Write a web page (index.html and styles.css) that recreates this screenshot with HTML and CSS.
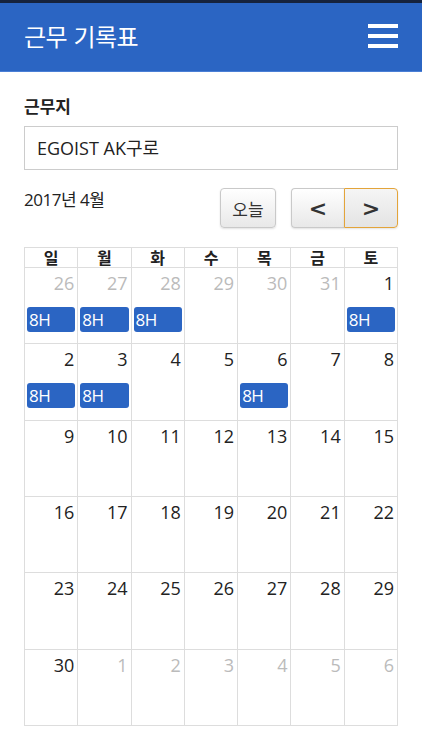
FILE: index.html
```html
<!DOCTYPE html>
<html lang="ko">
<head>
<meta charset="utf-8">
<link rel="stylesheet" href="styles.css">
</head>
<body>
<header class="topbar">
  <h1 class="title">근무 기록표</h1>
  <div class="menu"><span></span><span></span><span></span></div>
</header>
<main class="content">
  <div class="label">근무지</div>
  <div class="input">EGOIST AK구로</div>
  <div class="toolbar">
    <div class="month">2017년 4월</div>
    <div class="btns">
      <button class="btn today">오늘</button>
      <div class="group">
        <button class="btn nav">&lt;</button>
        <button class="btn nav focus">&gt;</button>
      </div>
    </div>
  </div>
  <div class="cal">
    <div class="dow">일</div><div class="dow">월</div><div class="dow">화</div><div class="dow">수</div><div class="dow">목</div><div class="dow">금</div><div class="dow">토</div>

    <div class="day other"><span class="num">26</span><span class="ev">8H</span></div>
    <div class="day other"><span class="num">27</span><span class="ev">8H</span></div>
    <div class="day other"><span class="num">28</span><span class="ev">8H</span></div>
    <div class="day other"><span class="num">29</span></div>
    <div class="day other"><span class="num">30</span></div>
    <div class="day other"><span class="num">31</span></div>
    <div class="day"><span class="num">1</span><span class="ev">8H</span></div>

    <div class="day"><span class="num">2</span><span class="ev">8H</span></div>
    <div class="day"><span class="num">3</span><span class="ev">8H</span></div>
    <div class="day"><span class="num">4</span></div>
    <div class="day"><span class="num">5</span></div>
    <div class="day"><span class="num">6</span><span class="ev">8H</span></div>
    <div class="day"><span class="num">7</span></div>
    <div class="day"><span class="num">8</span></div>

    <div class="day"><span class="num">9</span></div>
    <div class="day"><span class="num">10</span></div>
    <div class="day"><span class="num">11</span></div>
    <div class="day"><span class="num">12</span></div>
    <div class="day"><span class="num">13</span></div>
    <div class="day"><span class="num">14</span></div>
    <div class="day"><span class="num">15</span></div>

    <div class="day"><span class="num">16</span></div>
    <div class="day"><span class="num">17</span></div>
    <div class="day"><span class="num">18</span></div>
    <div class="day"><span class="num">19</span></div>
    <div class="day"><span class="num">20</span></div>
    <div class="day"><span class="num">21</span></div>
    <div class="day"><span class="num">22</span></div>

    <div class="day"><span class="num">23</span></div>
    <div class="day"><span class="num">24</span></div>
    <div class="day"><span class="num">25</span></div>
    <div class="day"><span class="num">26</span></div>
    <div class="day"><span class="num">27</span></div>
    <div class="day"><span class="num">28</span></div>
    <div class="day"><span class="num">29</span></div>

    <div class="day"><span class="num">30</span></div>
    <div class="day other"><span class="num">1</span></div>
    <div class="day other"><span class="num">2</span></div>
    <div class="day other"><span class="num">3</span></div>
    <div class="day other"><span class="num">4</span></div>
    <div class="day other"><span class="num">5</span></div>
    <div class="day other"><span class="num">6</span></div>
  </div>
</main>
</body>
</html>
```
FILE: styles.css
```css
* { box-sizing: border-box; }
html, body { margin: 0; padding: 0; background: #fff; }
body {
  width: 422px;
  height: 750px;
  overflow: hidden;
  font-family: "Open Sans", "Noto Sans CJK KR", sans-serif;
  color: #222;
}
.topbar {
  height: 72px;
  border-top: 3px solid #16233d;
  border-bottom: 1px solid #4a7fd6;
  background: #2b65c3;
  display: flex;
  align-items: center;
  justify-content: space-between;
  padding: 0 24px 0 24px;
}
.title {
  margin: 0;
  font-family: "Noto Sans CJK KR", sans-serif;
  font-weight: 400;
  font-size: 24px;
  color: #fff;
  letter-spacing: -0.5px;
  position: relative;
  top: -2px;
}
.menu {
  width: 30px;
  display: flex;
  flex-direction: column;
  gap: 6.5px;
  position: relative;
  top: -1px;
}
.menu span {
  display: block;
  height: 3.5px;
  background: #fff;
}
.content { padding: 0 24px; }
.label {
  margin-top: 22px;
  font-family: "Noto Sans CJK KR", sans-serif;
  font-weight: 700;
  font-size: 17px;
  line-height: 24px;
  color: #222;
}
.input {
  margin-top: 8px;
  height: 44px;
  border: 1px solid #ccc;
  padding: 0 12px;
  font-size: 18px;
  line-height: 42px;
  color: #222;
}
.toolbar {
  margin-top: 17px;
  display: flex;
  justify-content: space-between;
  align-items: flex-start;
  height: 60px;
}
.month {
  font-family: "Open Sans", "Noto Sans CJK KR", sans-serif;
  font-size: 17px;
  line-height: 24px;
  margin-top: 1px;
  letter-spacing: -0.5px;
}
.btns { display: flex; gap: 15px; margin-top: 1px; }
.group { display: flex; }
.btn {
  height: 40px;
  border: 1px solid #c9c9c9;
  border-radius: 4px;
  background: linear-gradient(#ffffff, #e8e8e8);
  box-shadow: 0 1px 2px rgba(0,0,0,0.12);
  font-family: "Noto Sans CJK KR", sans-serif;
  font-size: 17px;
  color: #333;
  padding: 0;
  margin: 0;
}
.today { width: 56px; }
.nav {
  width: 53px;
  font-family: "DejaVu Sans", sans-serif;
  font-weight: 700;
  font-size: 22px;
  color: #333;
}
.group .nav:first-child { border-radius: 4px 0 0 4px; border-right: none; }
.group .nav:last-child { border-radius: 0 4px 4px 0; width: 54px; }
.nav.focus { border: 1px solid #e3a43a; background: linear-gradient(#f5f5f5, #e4e4e4); }
.cal {
  display: grid;
  grid-template-columns: repeat(7, 1fr);
  grid-template-rows: 20px repeat(6, 76.33px);
  border-top: 1px solid #ddd;
  border-left: 1px solid #ddd;
  width: 374px;
}
.dow {
  border-right: 1px solid #ddd;
  border-bottom: 1px solid #ddd;
  text-align: center;
  font-family: "Noto Sans CJK KR", sans-serif;
  font-weight: 700;
  font-size: 16px;
  line-height: 18px;
  color: #222;
}
.day {
  border-right: 1px solid #ddd;
  border-bottom: 1px solid #ddd;
  display: flex;
  flex-direction: column;
  padding: 3px 2px 0 2px;
}
.num {
  text-align: right;
  font-size: 18px;
  line-height: 24px;
  padding-right: 1px;
  color: #222;
}
.other .num { color: #bbb; }
.ev {
  margin-top: 12px;
  height: 25px;
  background: #2b65c3;
  border-radius: 3px;
  color: #fff;
  font-size: 17px;
  line-height: 25px;
  padding-left: 2px;
  letter-spacing: -0.5px;
}
```
